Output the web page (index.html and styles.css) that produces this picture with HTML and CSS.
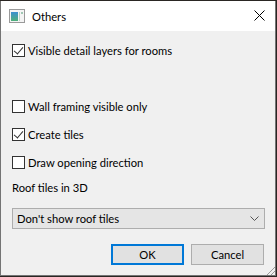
FILE: index.html
```html
<!DOCTYPE html>
<html lang="en">
<head>
<meta charset="UTF-8">
<title>Others</title>
<link rel="stylesheet" href="styles.css">
</head>
<body>
  <div class="window">
    <div class="titlebar">
      <svg class="app-icon" width="16" height="14" viewBox="0 0 16 14">
        <defs>
          <linearGradient id="pane" x1="0" y1="0" x2="0" y2="1">
            <stop offset="0" stop-color="#3b8fd0"/>
            <stop offset="1" stop-color="#4fb07a"/>
          </linearGradient>
        </defs>
        <rect x="0.5" y="0.5" width="15" height="13" fill="#f4f4f4" stroke="#9a9a9a"/>
        <rect x="2" y="3" width="7" height="9" fill="url(#pane)"/>
        <rect x="10" y="3" width="1" height="9" fill="#bcd6c8"/>
        <rect x="12" y="3" width="2" height="2" fill="#9fc7b3"/>
      </svg>
      <span class="title">Others</span>
      <svg class="close" width="11" height="11" viewBox="0 0 11 11">
        <path d="M0.5 0.5 L10.5 10.5 M10.5 0.5 L0.5 10.5" stroke="#000" stroke-width="1"/>
      </svg>
    </div>
    <div class="content">
      <label class="check-row">
        <span class="box checked"></span>Visible detail layers for rooms
      </label>
      <div class="spacer"></div>
      <label class="check-row">
        <span class="box"></span>Wall framing visible only
      </label>
      <label class="check-row">
        <span class="box checked"></span>Create tiles
      </label>
      <label class="check-row">
        <span class="box"></span>Draw opening direction
      </label>
      <div class="field-label">Roof tiles in 3D</div>
      <div class="select">
        <span>Don't show roof tiles</span>
        <svg width="9" height="5" viewBox="0 0 9 5">
          <path d="M0.5 0.5 L4.5 4.5 L8.5 0.5" fill="none" stroke="#555" stroke-width="1"/>
        </svg>
      </div>
      <div class="buttons">
        <button class="btn default">OK</button>
        <button class="btn">Cancel</button>
      </div>
    </div>
    <div class="grip"></div>
  </div>
</body>
</html>
```

FILE: styles.css
```css
body {
    margin: 0;
    padding: 0;
    background: #2a2623;
    font-family: 'Lato', 'Noto Sans', sans-serif;
    font-size: 11.2px;
    color: #000;
}
.window {
    position: relative;
    margin-top: 1px;
    width: 274px;
    height: 274px;
    border: 1px solid #747474;
    border-top: none;
    background: #f0f0f0;
    display: flex;
    flex-direction: column;
    overflow: hidden;
}
.titlebar {
    height: 30px;
    background: #fff;
    display: flex;
    align-items: center;
    padding-left: 8px;
    flex-shrink: 0;
}
.app-icon {
    margin-top: -1px;
}
.title {
    margin-left: 7px;
    flex: 1;
}
.close {
    margin-right: 10px;
    margin-top: -1px;
}
.content {
    padding: 5px 10px 0 11px;
    display: flex;
    flex-direction: column;
}
.check-row {
    height: 28px;
    display: flex;
    align-items: center;
}
.spacer {
    height: 28px;
}
.box {
    width: 11px;
    height: 11px;
    border: 1px solid #333;
    background: #fff;
    margin-right: 3px;
    position: relative;
    flex-shrink: 0;
}
.box.checked::after {
    content: '';
    position: absolute;
    left: 3px;
    top: 0px;
    width: 4px;
    height: 8px;
    border-right: 1.5px solid #333;
    border-bottom: 1.5px solid #333;
    transform: rotate(40deg);
}
.field-label {
    height: 22px;
    line-height: 24px;
}
.select {
    margin-top: 10px;
    height: 19px;
    border: 1px solid #adadad;
    background: #e5e5e5;
    display: flex;
    align-items: center;
    justify-content: space-between;
    padding: 0 5px 0 4px;
}
.buttons {
    margin-top: 15px;
    display: flex;
    justify-content: flex-end;
    gap: 7px;
    padding-right: 1px;
}
.btn {
    font-family: inherit;
    font-size: inherit;
    width: 73px;
    height: 21px;
    border: 1px solid #adadad;
    background: #e1e1e1;
    padding: 0;
    color: #000;
}
.btn.default {
    border: 2px solid #0078d7;
}
.grip {
    position: absolute;
    right: 0;
    bottom: 0;
    width: 10px;
    height: 10px;
    background: repeating-linear-gradient(135deg, transparent 0 2px, #9a9a9a 2px 3px);
    clip-path: polygon(100% 0, 100% 100%, 0 100%);
}
```
